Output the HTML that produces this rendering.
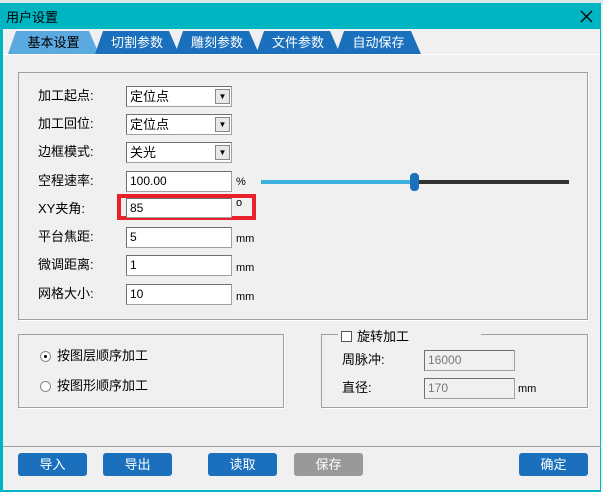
<!DOCTYPE html>
<html><head><meta charset="utf-8"><style>
*{margin:0;padding:0;box-sizing:border-box}
body{width:603px;height:492px;background:#f0f0f0;position:relative;overflow:hidden;font-family:"Liberation Sans","Noto Sans CJK SC",sans-serif;font-size:13px;color:#000}
.a{position:absolute}
.tab{position:absolute;top:31px;height:23px;clip-path:polygon(0 100%,8px 0,calc(100% - 10px) 0,100% 100%);color:#fff;font-size:13px;text-align:center;line-height:24px;background:#1a70bd}
.lbl{position:absolute;left:38px;line-height:16px}
.inp{position:absolute;left:126px;width:106px;height:21px;background:#fff;border:1px solid #a0a0a0;border-top-color:#707070;border-left-color:#707070;padding-left:3px;line-height:19px;font-size:12px}
.dd{position:absolute;right:1px;top:2px;width:15px;height:15px;background:#e8e8e8;border:1px solid #888;font-size:8px;line-height:14px;text-align:center}
.unit{position:absolute;left:236px;font-size:11px}
.btn{position:absolute;top:453px;width:69px;height:23px;background:#1a70bd;color:#fff;border-radius:3px;text-align:center;line-height:23px;font-size:13px}
.box{position:absolute;border:1px solid #a0a0a0;box-shadow:1px 1px 0 #fff}
</style></head><body>
<div class="a" style="left:0;top:0;width:603px;height:4px;background:#dfe6ea"></div>
<div class="a" style="left:0;top:3px;width:601px;height:489px;border:1px solid #00b5c2;border-left-width:3px;border-bottom-width:2px"></div>
<div class="a" style="left:0;top:3px;width:601px;height:26px;background:#00b5c2"></div>
<div class="a" style="left:6px;top:7px;font-size:13px">用户设置</div>
<svg class="a" style="left:580px;top:10px" width="13" height="13"><path d="M1 1L12 12M12 1L1 12" stroke="#000" stroke-width="1.3"/></svg>
<div class="tab" style="left:8px;width:91px;background:#5aa9e0;color:#000">基本设置</div>
<div class="tab" style="left:95px;width:84px">切割参数</div>
<div class="tab" style="left:175px;width:84px">雕刻参数</div>
<div class="tab" style="left:256px;width:84px">文件参数</div>
<div class="tab" style="left:336px;width:85px">自动保存</div>
<div class="a" style="left:3px;top:54px;width:597px;height:1px;background:#fff"></div>
<div class="box" style="left:18px;top:72px;width:570px;height:248px"></div>
<div class="lbl" style="top:88px">加工起点:</div>
<div class="inp" style="top:86px;font-size:13px">定位点<div class="dd">▼</div></div>
<div class="lbl" style="top:116px">加工回位:</div>
<div class="inp" style="top:114px;font-size:13px">定位点<div class="dd">▼</div></div>
<div class="lbl" style="top:144px">边框模式:</div>
<div class="inp" style="top:142px;font-size:13px">关光<div class="dd">▼</div></div>
<div class="lbl" style="top:173px">空程速率:</div>
<div class="inp" style="top:171px">100.00</div><div class="unit" style="top:176px">%</div>
<div class="a" style="left:261px;top:180px;width:153px;height:4px;background:#3bb0dc"></div>
<div class="a" style="left:414px;top:180px;width:155px;height:4px;background:#333"></div>
<div class="a" style="left:410px;top:173px;width:9px;height:18px;background:#1a70bd;border-radius:4px"></div>
<div class="lbl" style="top:201px">XY夹角:</div>
<div class="a" style="left:117px;top:194px;width:139px;height:26px;border:4px solid #e8202a"></div>
<div class="inp" style="top:198px;width:106px;height:20px">85</div><div class="unit" style="top:197px">o</div>
<div class="lbl" style="top:229px">平台焦距:</div>
<div class="inp" style="top:227px">5</div><div class="unit" style="top:233px">mm</div>
<div class="lbl" style="top:257px">微调距离:</div>
<div class="inp" style="top:255px">1</div><div class="unit" style="top:262px">mm</div>
<div class="lbl" style="top:286px">网格大小:</div>
<div class="inp" style="top:284px">10</div><div class="unit" style="top:291px">mm</div>
<div class="box" style="left:18px;top:334px;width:266px;height:74px"></div>
<div class="a" style="left:40px;top:351px;width:11px;height:11px;border-radius:50%;border:1px solid #888;background:#fff"><div style="margin:3px;width:3px;height:3px;background:#000;border-radius:50%"></div></div>
<div class="a" style="left:57px;top:348px;line-height:16px">按图层顺序加工</div>
<div class="a" style="left:40px;top:381px;width:11px;height:11px;border-radius:50%;border:1px solid #888;background:#fff"></div>
<div class="a" style="left:57px;top:378px;line-height:16px">按图形顺序加工</div>
<div class="box" style="left:321px;top:334px;width:267px;height:74px"></div>
<div class="a" style="left:338px;top:326px;width:143px;height:16px;background:#f0f0f0"></div>
<div class="a" style="left:341px;top:331px;width:11px;height:11px;border:1px solid #555;background:#fff"></div>
<div class="a" style="left:357px;top:329px;line-height:16px">旋转加工</div>
<div class="a" style="left:342px;top:352px;line-height:16px">周脉冲:</div>
<div class="inp" style="left:424px;top:350px;width:91px;background:#f0f0f0;color:#777">16000</div>
<div class="a" style="left:342px;top:380px;line-height:16px">直径:</div>
<div class="inp" style="left:424px;top:378px;width:91px;background:#f0f0f0;color:#777">170</div>
<div class="unit" style="left:518px;top:383px">mm</div>
<div class="a" style="left:3px;top:446px;width:598px;height:1px;background:#a0a0a0"></div>
<div class="btn" style="left:18px">导入</div>
<div class="btn" style="left:103px">导出</div>
<div class="btn" style="left:208px">读取</div>
<div class="btn" style="left:294px;background:#999">保存</div>
<div class="btn" style="left:519px">确定</div>
</body></html>
